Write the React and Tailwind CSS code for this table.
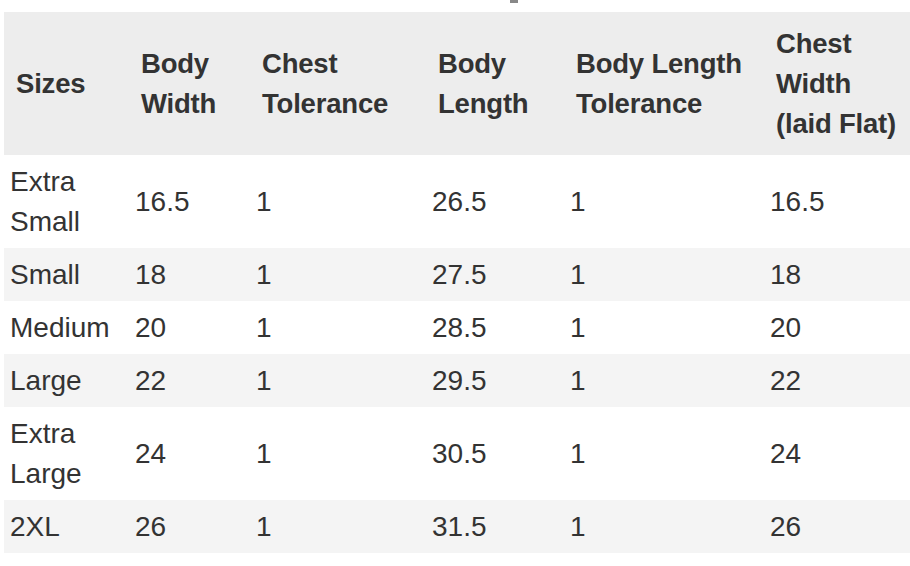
import React from "react";

const rows = [
  ["Extra Small", "16.5", "1", "26.5", "1", "16.5"],
  ["Small", "18", "1", "27.5", "1", "18"],
  ["Medium", "20", "1", "28.5", "1", "20"],
  ["Large", "22", "1", "29.5", "1", "22"],
  ["Extra Large", "24", "1", "30.5", "1", "24"],
  ["2XL", "26", "1", "31.5", "1", "26"],
];

const heads = [
  "Sizes",
  "Body Width",
  "Chest Tolerance",
  "Body Length",
  "Body Length Tolerance",
  "Chest Width (laid Flat)",
];

const App = () => {
  return (
    <div
      className="w-[910px] h-[566px] overflow-hidden bg-white text-[#333] pl-[4px]"
      style={{ fontFamily: '"Liberation Sans", Arial, sans-serif' }}
    >
      <div className="h-[12px] relative">
        <span className="absolute left-[506px] top-0 w-[8px] h-[3px] bg-[#888]" />
      </div>
      <table className="table-fixed w-[906px] border-collapse text-[28px] leading-[40px]">
        <colgroup>
          <col className="w-[125px]" />
          <col className="w-[121px]" />
          <col className="w-[176px]" />
          <col className="w-[138px]" />
          <col className="w-[200px]" />
          <col className="w-[146px]" />
        </colgroup>
        <thead>
          <tr className="bg-[#ededed]">
            {heads.map((h, i) => (
              <th
                key={i}
                className="text-left align-middle font-bold pl-[12px] pr-0 py-[11.5px] text-[27.5px] tracking-[-0.2px]"
              >
                {h}
              </th>
            ))}
          </tr>
        </thead>
        <tbody>
          {rows.map((r, ri) => (
            <tr key={ri} className={ri % 2 === 1 ? "bg-[#f4f4f4]" : "bg-white"}>
              {r.map((c, ci) => (
                <td key={ci} className="align-middle pl-[6px] pr-[4px] py-[6.5px]">
                  {c}
                </td>
              ))}
            </tr>
          ))}
        </tbody>
      </table>
    </div>
  );
};

export default App;
